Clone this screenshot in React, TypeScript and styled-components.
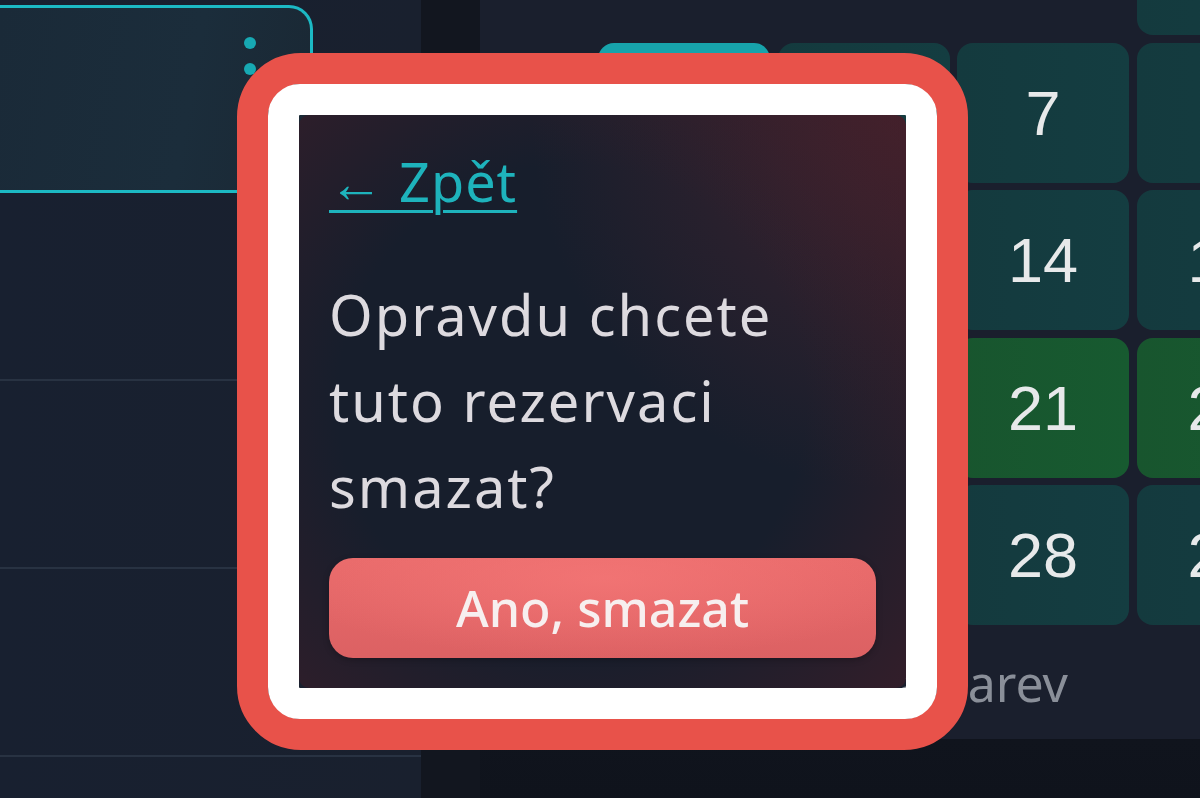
import React from 'react';
import styled, { createGlobalStyle, css } from 'styled-components';

type CellKind = 'empty' | 'plain' | 'today' | 'booked';
type Day = { day: number | null; kind: CellKind; cut?: boolean };

// visible part of the month grid (last four columns, scrolled down a bit)
const weeks: Day[][] = [
  [
    { day: null, kind: 'empty', cut: true },
    { day: null, kind: 'empty', cut: true },
    { day: null, kind: 'empty', cut: true },
    { day: 1, kind: 'plain', cut: true },
  ],
  [
    { day: 5, kind: 'today' },
    { day: 6, kind: 'plain' },
    { day: 7, kind: 'plain' },
    { day: 8, kind: 'plain' },
  ],
  [
    { day: 12, kind: 'plain' },
    { day: 13, kind: 'plain' },
    { day: 14, kind: 'plain' },
    { day: 15, kind: 'plain' },
  ],
  [
    { day: 19, kind: 'booked' },
    { day: 20, kind: 'booked' },
    { day: 21, kind: 'booked' },
    { day: 22, kind: 'booked' },
  ],
  [
    { day: 26, kind: 'plain' },
    { day: 27, kind: 'plain' },
    { day: 28, kind: 'plain' },
    { day: 29, kind: 'plain' },
  ],
];

const reservations = ['a', 'b', 'c'];

export default function App() {
  return (
    <>
      <GlobalStyle />
      <Page>
        <Sidebar>
          <ActiveCard>
            <MenuDots>
              <i />
              <i />
              <i />
            </MenuDots>
          </ActiveCard>
          {reservations.map((key) => (
            <ListRow key={key} />
          ))}
        </Sidebar>
        <Gutter />
        <Main>
          <Calendar>
            {weeks.map((week, w) =>
              week.map((cell, d) => (
                <Cell key={`${w}-${d}`} $kind={cell.kind}>
                  {!cell.cut && cell.day}
                </Cell>
              )),
            )}
          </Calendar>
          <Legend>Legenda barev</Legend>
          <Footer />
        </Main>

        <Highlight>
          <WhiteRing>
            <Popup>
              <BackLink href="#">← Zpět</BackLink>
              <Question>Opravdu chcete tuto rezervaci smazat?</Question>
              <DangerButton>Ano, smazat</DangerButton>
            </Popup>
          </WhiteRing>
        </Highlight>
      </Page>
    </>
  );
}

const GlobalStyle = createGlobalStyle`
  * { box-sizing: border-box; }
  html, body { margin: 0; padding: 0; background: #161d2a; }
  body { font-family: "Noto Sans", "Liberation Sans", sans-serif; }
`;

const Page = styled.div`
  position: relative;
  display: flex;
  width: 1200px;
  height: 798px;
  overflow: hidden;
  background: #1a1f2c;
`;

const Sidebar = styled.div`
  width: 421px;
  flex-shrink: 0;
  display: flex;
  flex-direction: column;
  padding-top: 5px;
  background: linear-gradient(90deg, #182030 0%, #19202e 100%);
`;

const ActiveCard = styled.div`
  position: relative;
  width: 313px;
  height: 188px;
  flex-shrink: 0;
  border: 3px solid #1cb9c4;
  border-left: none;
  border-radius: 0 24px 24px 0;
  background: linear-gradient(100deg, #1a2a38 0%, #1b2d3b 60%, #1a2834 100%);
`;

const MenuDots = styled.div`
  position: absolute;
  top: 29px;
  left: 244px;
  display: flex;
  flex-direction: column;
  gap: 14px;
  i {
    width: 12px;
    height: 12px;
    border-radius: 50%;
    background: #17a9b3;
  }
`;

const ListRow = styled.div`
  height: 188px;
  flex-shrink: 0;
  border-bottom: 2px solid #283242;
`;

const Gutter = styled.div`
  width: 59px;
  flex-shrink: 0;
  background: #12161f;
`;

const Main = styled.div`
  flex: 1;
  min-width: 0;
  overflow: hidden;
  display: flex;
  flex-direction: column;
  background: #1a1f2d;
`;

const Calendar = styled.div`
  display: grid;
  grid-template-columns: repeat(4, 172px);
  grid-template-rows: 35px repeat(4, 140px);
  column-gap: 7.5px;
  row-gap: 7.5px;
  padding-left: 118px;
`;

const cellColors: Record<CellKind, string> = {
  empty: 'transparent',
  plain: 'linear-gradient(90deg, #143a3e 0%, #143d41 100%)',
  today: '#17a3ab',
  booked: 'linear-gradient(90deg, #18552e 0%, #175a30 100%)',
};

const Cell = styled.div<{ $kind: CellKind }>`
  display: flex;
  align-items: center;
  justify-content: center;
  border-radius: 16px;
  font-family: "Liberation Sans", Arial, sans-serif;
  font-size: 63px;
  color: #e7e9ea;
  ${({ $kind }) => css`
    background: ${cellColors[$kind]};
  `}
  &:nth-child(-n + 4) {
    border-radius: 0 0 16px 16px;
  }
`;

const Legend = styled.div`
  margin-top: 28px;
  padding-right: 132px;
  text-align: right;
  white-space: nowrap;
  font-size: 50px;
  line-height: 60px;
  color: #8a8f99;
`;

const Footer = styled.div`
  margin-top: 26px;
  flex: 1;
  background: linear-gradient(180deg, #10141d 0%, #0f131c 100%);
`;

const Highlight = styled.div`
  position: absolute;
  left: 237px;
  top: 53px;
  width: 731px;
  height: 697px;
  border: 31px solid #e8524a;
  border-radius: 64px;
`;

const WhiteRing = styled.div`
  width: 100%;
  height: 100%;
  border: 31px solid #ffffff;
  border-radius: 32px;
`;

const Popup = styled.div`
  width: 100%;
  height: 100%;
  display: flex;
  flex-direction: column;
  align-items: flex-start;
  padding: 28px 30px 30px;
  border-radius: 10px;
  background:
    radial-gradient(ellipse 70% 75% at 45% 50%, rgba(22, 29, 44, 0) 55%, rgba(70, 30, 40, 0.55) 100%),
    radial-gradient(circle at 100% 0%, rgba(90, 38, 48, 0.6) 0%, rgba(90, 38, 48, 0) 45%),
    #171e2c;
`;

const BackLink = styled.a`
  font-size: 54px;
  line-height: 76px;
  letter-spacing: 1px;
  color: #1eb3bc;
  text-decoration: underline;
  text-decoration-thickness: 3px;
  text-underline-offset: 8px;
`;

const Question = styled.p`
  max-width: 520px;
  margin: 52px 0 0;
  font-size: 56px;
  line-height: 86px;
  letter-spacing: 2px;
  color: #dddadf;
`;

const DangerButton = styled.button`
  margin-top: auto;
  width: 100%;
  height: 100px;
  border: none;
  border-radius: 24px;
  font-family: inherit;
  font-size: 50px;
  font-weight: 500;
  color: #f7efef;
  background:
    radial-gradient(ellipse 60% 80% at 50% 20%, rgba(246, 120, 120, 0.7) 0%, rgba(246, 120, 120, 0) 100%),
    linear-gradient(180deg, #e86a6a 0%, #dc6163 100%);
  box-shadow: 0 2px 6px rgba(0, 0, 0, 0.25);
`;
